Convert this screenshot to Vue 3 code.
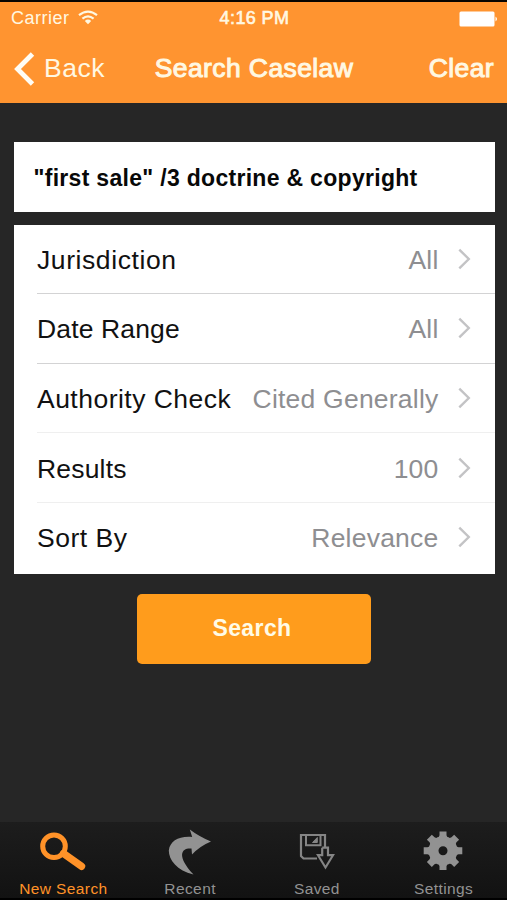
<script setup>
const rows = [
  { label: 'Jurisdiction', value: 'All', tone: 'strong', tracking: 0.58 },
  { label: 'Date Range', value: 'All', tone: 'strong', tracking: 0.14 },
  { label: 'Authority Check', value: 'Cited Generally', tone: 'soft', tracking: 0.48 },
  { label: 'Results', value: '100', tone: 'soft', tracking: 0.18 },
  { label: 'Sort By', value: 'Relevance', tone: 'none', tracking: 0.5 },
]
const tabs = [
  { id: 'search', label: 'New Search', active: true },
  { id: 'recent', label: 'Recent' },
  { id: 'saved', label: 'Saved' },
  { id: 'settings', label: 'Settings' },
]
const teeth = [0, 45, 90, 135, 180, 225, 270, 315]
</script>

<template>
  <div class="screen">
    <header class="top">
      <div class="status">
        <div class="carrier">
          <span>Carrier</span>
          <svg class="wifi" width="20" height="15" viewBox="0 0 20 15" fill="none" stroke="#fff8e2" stroke-width="2.2">
            <path d="M1 5.2Q10-2 19 5.2" />
            <path d="M4.4 8.6Q10 4 15.6 8.6" />
            <path d="M6.8 11Q10 8.2 13.2 11L10 14.3Z" fill="#fff8e2" stroke="none" />
          </svg>
        </div>
        <div class="time">4:16 PM</div>
        <div class="power">
          <svg width="39" height="16" viewBox="0 0 39 16" fill="#fff">
            <rect x="0.5" y="0.5" width="35" height="15" rx="1.5" />
            <path d="M36.5 5.5Q39.5 8 36.5 10.5Z" />
          </svg>
        </div>
      </div>
      <nav class="nav">
        <div class="back">
          <svg width="21" height="34" viewBox="0 0 21 34" fill="none" stroke="#fffdf5" stroke-width="4.8">
            <path d="M18.5 2L3.5 17L18.5 32" />
          </svg>
          <span>Back</span>
        </div>
        <div class="title">Search Caselaw</div>
        <div class="clear">Clear</div>
      </nav>
    </header>

    <main class="content">
      <div class="query">"first sale" /3 doctrine &amp; copyright</div>
      <div class="list">
        <div v-for="row in rows" :key="row.label" class="row" :class="row.tone">
          <span class="label" :style="{ letterSpacing: row.tracking + 'px' }">{{ row.label }}</span>
          <span class="value">{{ row.value }}</span>
          <svg class="chevron" width="13" height="22" viewBox="0 0 13 22" fill="none" stroke="#c3c3c5" stroke-width="2.4">
            <path d="M1.3 1.6L10.8 11L1.3 20.4" />
          </svg>
        </div>
      </div>
      <button class="submit">Search</button>
    </main>

    <footer class="tabs">
      <div v-for="tab in tabs" :key="tab.id" class="tab" :class="{ active: tab.active }">
        <svg v-if="tab.id === 'search'" class="icon" width="50" height="44" viewBox="0 0 50 44" fill="none" stroke="#ff9228">
          <circle cx="16" cy="17.3" r="11.3" stroke-width="5" />
          <path d="M25.5 24.5L43.5 37.3" stroke-width="7.4" stroke-linecap="round" />
        </svg>
        <svg v-else-if="tab.id === 'recent'" class="icon" width="50" height="44" viewBox="0 0 50 44" fill="#929292">
          <path d="M24.8 0.5Q34 7.5 46 12.5Q35 17 27 25.5L26.5 19.5C17 18.5 10.5 26 28.5 45.5C12 41.5 3.8 31 3.8 21.5C5 12 14 6.8 27.2 8Z" />
        </svg>
        <svg v-else-if="tab.id === 'saved'" class="icon" width="50" height="44" viewBox="0 0 50 44" fill="none" stroke="#858585" stroke-width="2.2">
          <path d="M25 29.5H11.5L9 27V6H33V18" />
          <path d="M14 6V16.2H28.5V6" stroke-width="2" />
          <path d="M25.3 8.5V13.5H20.5Z" fill="#858585" stroke-width="1" />
          <path d="M30.2 18.7H36V26.2H41L33.5 38.5L26 26.2H30.2V18.7" />
        </svg>
        <svg v-else class="icon" width="50" height="44" viewBox="0 0 50 44">
          <g transform="translate(24 21.8)" fill="#929292">
            <path v-for="a in teeth" :key="a" :transform="`rotate(${a})`" d="M-5.4-11L-3.5-15.5V-19.3H3.5V-15.5L5.4-11Z" />
            <circle r="9.5" fill="none" stroke="#929292" stroke-width="10" />
          </g>
        </svg>
        <span>{{ tab.label }}</span>
      </div>
    </footer>
  </div>
</template>

<style>
body {
  background: #262626;
}
</style>

<style scoped>
.screen {
  width: 507px;
  height: 900px;
  overflow: hidden;
  box-sizing: border-box;
  display: flex;
  flex-direction: column;
  background: #262626;
  border-top: 2px solid #080400;
  border-bottom: 2px solid #000;
  font-family: "Liberation Sans", Arial, sans-serif;
  white-space: nowrap;
}
.top {
  height: 101px;
  flex: none;
  background: #ff9430;
  color: #fff8e2;
}
.status {
  height: 33px;
  display: grid;
  grid-template-columns: 1fr auto 1fr;
  align-items: center;
  padding: 0 9px 0 11px;
  font-size: 18px;
}
.carrier {
  display: flex;
  align-items: center;
  gap: 8px;
  letter-spacing: 0.5px;
}
.wifi {
  margin-top: -3px;
}
.time {
  letter-spacing: 0.4px;
  -webkit-text-stroke: 0.6px #fff8e2;
}
.power {
  display: flex;
  justify-content: flex-end;
}
.nav {
  height: 67px;
  display: grid;
  grid-template-columns: 1fr auto 1fr;
  align-items: center;
  padding: 0 13px 0 14px;
  font-size: 26.5px;
}
.back {
  display: flex;
  align-items: center;
  gap: 9px;
  letter-spacing: 0.5px;
}
.title,
.clear {
  -webkit-text-stroke: 1px #fff8e2;
  letter-spacing: 0.4px;
}
.clear {
  text-align: right;
}
.content {
  flex: 1;
  display: flex;
  flex-direction: column;
  padding: 39px 12.5px 0 13.5px;
}
.query {
  height: 70px;
  box-sizing: border-box;
  padding: 1px 0 0 20px;
  line-height: 70px;
  background: #fff;
  color: #080808;
  font-size: 23px;
  font-weight: bold;
  letter-spacing: 0.3px;
}
.list {
  margin-top: 12.5px;
  padding-left: 23.5px;
  height: 349.5px;
  box-sizing: border-box;
  background: #fff;
  font-size: 26.5px;
}
.row {
  height: 69.6px;
  box-sizing: border-box;
  display: flex;
  align-items: center;
  padding: 3px 24px 0 0;
  border-bottom: 1px solid transparent;
}
.strong {
  border-color: #d3d3d4;
}
.soft {
  border-color: #efefef;
}
.label {
  color: #111;
}
.value {
  margin-left: auto;
  color: #8e8e91;
  letter-spacing: 0.22px;
}
.chevron {
  margin: -3px 0 0 19px;
}
.submit {
  align-self: center;
  width: 234px;
  height: 70px;
  margin-top: 20px;
  padding: 0 4px 2px 0;
  border: 0;
  border-radius: 5px;
  background: #ff9c1c;
  color: #fffbe6;
  font: bold 23px "Liberation Sans", Arial, sans-serif;
  letter-spacing: 0.4px;
}
.tabs {
  height: 76px;
  flex: none;
  display: grid;
  grid-template-columns: repeat(4, 1fr);
  background: linear-gradient(#1d1d1d, #121212);
}
.tab {
  display: flex;
  flex-direction: column;
  align-items: center;
  padding-top: 7px;
  color: #929292;
  font-size: 15.5px;
  letter-spacing: 0.4px;
  line-height: 18px;
}
.tab span {
  margin-top: 7px;
}
.active {
  color: #ff9228;
}
.icon {
  flex: none;
  overflow: visible;
}
</style>
